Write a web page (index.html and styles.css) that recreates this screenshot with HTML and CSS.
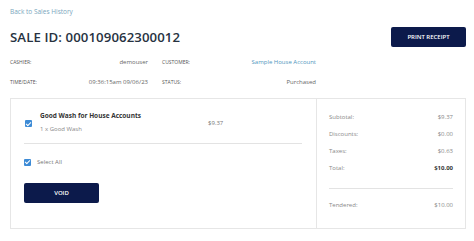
FILE: index.html
```html
<!DOCTYPE html>
<html lang="en">
<head>
    <meta charset="UTF-8">
    <title>Sale Details</title>
    <link rel="stylesheet" href="styles.css">
</head>
<body>
    <div class="page">
        <a class="back-link" href="#">Back to Sales History</a>

        <div class="title-row">
            <h1 class="title">SALE ID: 000109062300012</h1>
            <button class="btn print-btn">PRINT RECEIPT</button>
        </div>

        <div class="meta">
            <div class="meta-pair">
                <span class="meta-label">CASHIER:</span>
                <span class="meta-value">demouser</span>
            </div>
            <div class="meta-pair">
                <span class="meta-label">CUSTOMER:</span>
                <a class="meta-link" href="#">Sample House Account</a>
            </div>
            <div class="meta-pair">
                <span class="meta-label">TIME/DATE:</span>
                <span class="meta-value">09:36:15am 09/06/23</span>
            </div>
            <div class="meta-pair">
                <span class="meta-label">STATUS:</span>
                <span class="meta-value">Purchased</span>
            </div>
        </div>

        <div class="panel">
            <div class="items">
                <div class="item">
                    <span class="check"></span>
                    <div class="item-info">
                        <div class="item-name">Good Wash for House Accounts</div>
                        <div class="item-qty">1 x Good Wash</div>
                    </div>
                    <div class="item-price">$9.37</div>
                </div>
                <div class="select-all">
                    <span class="check"></span>
                    <span>Select All</span>
                </div>
                <button class="btn void-btn">VOID</button>
            </div>
            <div class="totals">
                <div class="total-row"><span>Subtotal:</span><span>$9.37</span></div>
                <div class="total-row"><span>Discounts:</span><span>$0.00</span></div>
                <div class="total-row"><span>Taxes:</span><span>$0.63</span></div>
                <div class="total-row"><span>Total:</span><strong>$10.00</strong></div>
                <div class="total-row tendered"><span>Tendered:</span><span>$10.00</span></div>
            </div>
        </div>
    </div>
</body>
</html>
```

FILE: styles.css
```css
body {
    font-family: "Open Sans", "Liberation Sans", sans-serif;
    margin: 0;
    padding: 0;
    background: #fff;
    color: #666;
}

.page {
    padding: 7px 8px 0 10px;
}

.back-link {
    display: block;
    font-size: 6.5px;
    color: #7aa6bd;
    text-decoration: none;
    line-height: 10px;
}

.title-row {
    display: flex;
    justify-content: space-between;
    align-items: center;
    margin-top: 9px;
}

.title {
    margin: 0;
    font-size: 13.2px;
    font-weight: 600;
    color: #27323f;
    letter-spacing: 0.1px;
}

.btn {
    font-family: inherit;
    border: none;
    border-radius: 2px;
    background: #0c1a4b;
    color: #fff;
    font-size: 6px;
    font-weight: 600;
    cursor: pointer;
}

.print-btn {
    width: 75px;
    height: 20px;
    margin-top: 1px;
}

.meta {
    display: grid;
    grid-template-columns: 138px 154px;
    column-gap: 14px;
    row-gap: 9px;
    margin-top: 10px;
    font-size: 6px;
    line-height: 11px;
    white-space: nowrap;
}

.meta-pair {
    display: flex;
    justify-content: space-between;
}

.meta-label {
    font-size: 5px;
    color: #555;
}

.meta-value {
    color: #666;
}

.meta-link {
    color: #4f96bd;
    text-decoration: none;
}

.panel {
    display: flex;
    margin-top: 10px;
    border: 1px solid #e6e6e6;
    height: 131px;
    box-sizing: border-box;
}

.items {
    flex: 0 0 306px;
    box-sizing: border-box;
    border-right: 1px solid #e6e6e6;
    padding: 12px 14px 0 13px;
}

.item {
    display: flex;
    align-items: center;
    padding-bottom: 9px;
    border-bottom: 1px solid #e3e3e3;
}

.check {
    display: inline-block;
    position: relative;
    width: 7px;
    height: 7px;
    background: #3d8bd6;
    border-radius: 1px;
    flex: none;
}

.check::after {
    content: "";
    position: absolute;
    left: 2px;
    top: 0.5px;
    width: 2px;
    height: 4px;
    border: solid #fff;
    border-width: 0 1px 1px 0;
    transform: rotate(45deg);
}

.item .check {
    margin-left: 1px;
    margin-top: 2px;
}

.item-info {
    margin-left: 8px;
    width: 168px;
}

.item-name {
    font-size: 6.5px;
    font-weight: 700;
    color: #333;
    line-height: 9px;
}

.item-qty {
    font-size: 6px;
    color: #888;
    margin-top: 5px;
    line-height: 9px;
}

.item-price {
    font-size: 6px;
    color: #777;
}

.select-all {
    display: flex;
    align-items: center;
    gap: 6px;
    margin-top: 14px;
    font-size: 6px;
    color: #777;
}

.void-btn {
    display: block;
    width: 75px;
    height: 20px;
    margin-top: 17px;
}

.totals {
    flex: 1;
    padding: 13px 12px 0 12px;
    font-size: 6px;
    color: #888;
}

.total-row {
    display: flex;
    justify-content: space-between;
    line-height: 11px;
    margin-bottom: 6px;
}

.total-row strong {
    color: #333;
    font-weight: 700;
}

.tendered {
    border-top: 1px solid #e3e3e3;
    padding-top: 11px;
    margin-top: 14px;
}
```
